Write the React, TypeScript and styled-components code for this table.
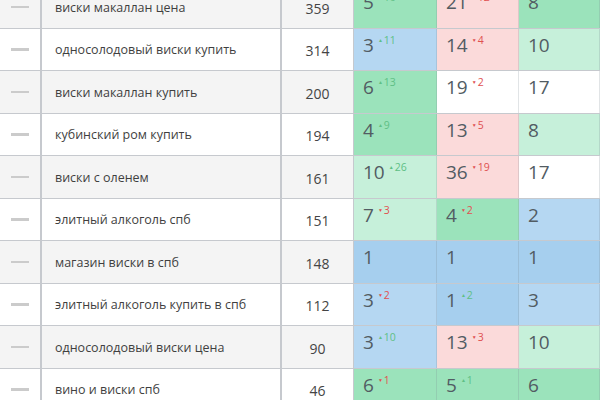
import React from "react";
import styled, { createGlobalStyle } from "styled-components";

const Global = createGlobalStyle`
  html, body { margin: 0; padding: 0; background: #ffffff; }
  body { font-family: "Open Sans", "Noto Sans", sans-serif; overflow: hidden; }
`;

type Tone = "dg" | "lg" | "pink" | "white" | "blue" | "lblue";
type Pos = { v: number; d?: number; t: Tone };
type Row = { kw: string; vol: number; cells: Pos[] };

const bg: Record<Tone, string> = {
  dg: "#9be3bb",
  lg: "#c6f0da",
  pink: "#fbdada",
  white: "#ffffff",
  blue: "#a6cfee",
  lblue: "#b5d7f2",
};

const rows: Row[] = [
  { kw: "виски макаллан цена", vol: 359, cells: [{ v: 5, d: 10, t: "dg" }, { v: 21, d: -12, t: "pink" }, { v: 8, t: "dg" }] },
  { kw: "односолодовый виски купить", vol: 314, cells: [{ v: 3, d: 11, t: "lblue" }, { v: 14, d: -4, t: "pink" }, { v: 10, t: "lg" }] },
  { kw: "виски макаллан купить", vol: 200, cells: [{ v: 6, d: 13, t: "dg" }, { v: 19, d: -2, t: "white" }, { v: 17, t: "white" }] },
  { kw: "кубинский ром купить", vol: 194, cells: [{ v: 4, d: 9, t: "dg" }, { v: 13, d: -5, t: "pink" }, { v: 8, t: "lg" }] },
  { kw: "виски с оленем", vol: 161, cells: [{ v: 10, d: 26, t: "lg" }, { v: 36, d: -19, t: "pink" }, { v: 17, t: "white" }] },
  { kw: "элитный алкоголь спб", vol: 151, cells: [{ v: 7, d: -3, t: "lg" }, { v: 4, d: -2, t: "dg" }, { v: 2, t: "lblue" }] },
  { kw: "магазин виски в спб", vol: 148, cells: [{ v: 1, t: "blue" }, { v: 1, t: "blue" }, { v: 1, t: "blue" }] },
  { kw: "элитный алкоголь купить в спб", vol: 112, cells: [{ v: 3, d: -2, t: "lblue" }, { v: 1, d: 2, t: "blue" }, { v: 3, t: "lblue" }] },
  { kw: "односолодовый виски цена", vol: 90, cells: [{ v: 3, d: 10, t: "lblue" }, { v: 13, d: -3, t: "pink" }, { v: 10, t: "lg" }] },
  { kw: "вино и виски спб", vol: 46, cells: [{ v: 6, d: -1, t: "dg" }, { v: 5, d: 1, t: "dg" }, { v: 6, t: "dg" }] },
];

const Table = styled.div`
  margin-top: -14px;
  display: flex;
  flex-direction: column;
  width: 600px;
`;

const RowBox = styled.div<{ $alt: boolean }>`
  display: grid;
  grid-template-columns: 42px 240px 72px 83px 82px 81px;
  height: 42.5px;
  box-sizing: border-box;
  border-bottom: 1.5px solid #c6c9ce;
  background: ${(p) => (p.$alt ? "#f4f4f4" : "#ffffff")};
`;

const DashCell = styled.div`
  display: flex;
  align-items: center;
  justify-content: center;
  border-right: 2px solid #c6c9ce;
`;

const Dash = styled.span`
  display: block;
  width: 18px;
  height: 2.5px;
  background: #cbcbcb;
  margin-left: -1px;
`;

const KwCell = styled.div`
  display: flex;
  align-items: center;
  padding-left: 13px;
  font-size: 12.5px;
  color: #3f3f3f;
  border-right: 2px solid #c6c9ce;
  padding-top: 1px;
`;

const VolCell = styled.div`
  display: flex;
  align-items: center;
  justify-content: center;
  font-size: 14px;
  color: #444;
  padding-top: 3px;
  border-right: 1.5px solid #c6c9ce;
`;

const PosCell = styled.div<{ $tone: Tone }>`
  background: ${(p) => bg[p.$tone]};
  padding: 3px 0 0 9px;
  border-right: 1px solid rgba(120, 130, 140, 0.22);
  display: flex;
  align-items: flex-start;
  font-size: 19px;
  color: #525c63;
  line-height: 26px;
`;

const Delta = styled.span<{ $up: boolean }>`
  font-size: 10.5px;
  line-height: 12px;
  margin-left: 4px;
  margin-top: 2px;
  color: ${(p) => (p.$up ? "#5fbf85" : "#e05050")};
  display: flex;
  align-items: center;
`;

const Arrow = styled.span`
  font-size: 5px;
  margin-right: 1px;
`;

export default function App() {
  return (
    <>
      <Global />
      <Table>
        {rows.map((r, i) => (
          <RowBox key={i} $alt={i % 2 === 0}>
            <DashCell>
              <Dash />
            </DashCell>
            <KwCell>{r.kw}</KwCell>
            <VolCell>{r.vol}</VolCell>
            {r.cells.map((c, j) => (
              <PosCell key={j} $tone={c.t}>
                {c.v}
                {c.d !== undefined && (
                  <Delta $up={c.d > 0}>
                    <Arrow>{c.d > 0 ? "▲" : "▼"}</Arrow>
                    {Math.abs(c.d)}
                  </Delta>
                )}
              </PosCell>
            ))}
          </RowBox>
        ))}
      </Table>
    </>
  );
}
